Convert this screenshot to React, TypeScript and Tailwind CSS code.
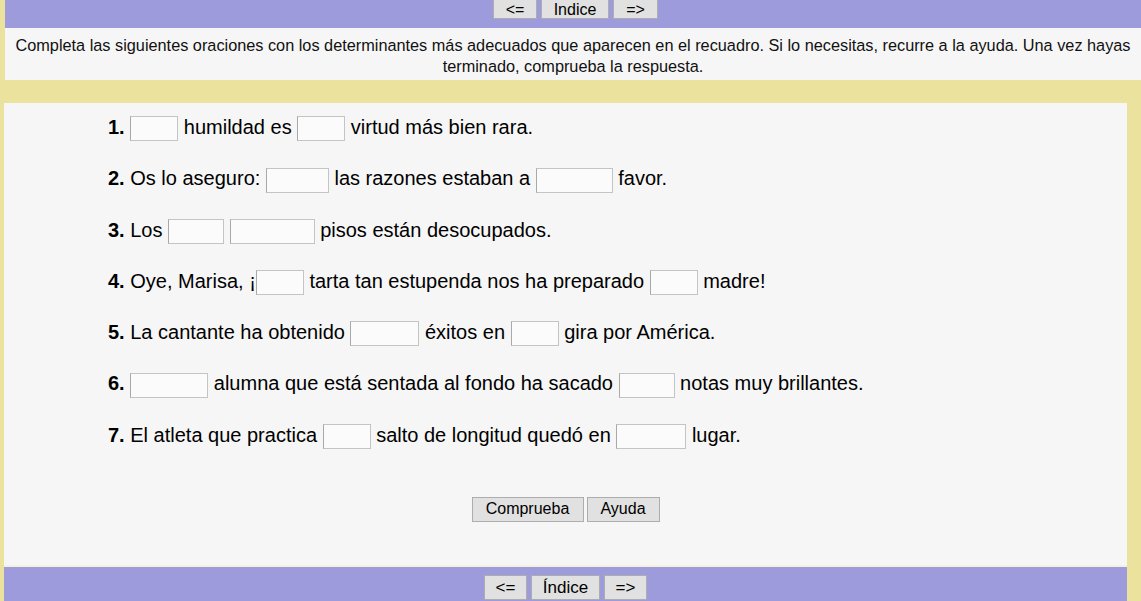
import React from "react";

const F = { fontFamily: '"Liberation Sans", Arial, sans-serif' };

function Box({ w }: { w: string }) {
  return (
    <span
      className={`inline-block h-[25px] align-middle border border-[#c4c4c4] border-l-[#a9a9a9] bg-[#fbfbfb] ${w}`}
    />
  );
}

function NavBtn({ children, w }: { children: React.ReactNode; w: string }) {
  return (
    <button
      className={`h-[25px] ${w} bg-[#e1e1e1] border border-[#adadad] text-[16px] text-black leading-none flex items-center justify-center`}
    >
      {children}
    </button>
  );
}

export default function App() {
  return (
    <div className="w-[1141px] h-[601px] overflow-hidden bg-[#ebe39d] text-black" style={F}>
      {/* top nav */}
      <div className="ml-[5px] h-[28px] bg-[#9e9bdc] flex justify-center pl-[5px]">
        <div className="mt-[-3px] flex gap-[4px]">
          <button className="h-[22px] w-[44px] bg-[#e1e1e1] border border-[#adadad] text-[16px] leading-none flex items-center justify-center pt-[3px]">&lt;=</button>
          <button className="h-[22px] w-[68px] bg-[#e1e1e1] border border-[#adadad] text-[16px] leading-none flex items-center justify-center pt-[3px]">Indice</button>
          <button className="h-[22px] w-[45px] bg-[#e1e1e1] border border-[#adadad] text-[16px] leading-none flex items-center justify-center pt-[3px]">=&gt;</button>
        </div>
      </div>
      {/* info */}
      <div className="ml-[5px] h-[52px] bg-[#f6f6f6] pt-[7px] px-[8px] text-center text-[16.3px] leading-[21px] text-[#111]">
        Completa las siguientes oraciones con los determinantes más adecuados que aparecen en el recuadro. Si lo necesitas, recurre a la ayuda. Una vez hayas terminado, comprueba la respuesta.
      </div>
      <div className="h-[23px]" />
      {/* main panel */}
      <div className="ml-[4px] mr-[14px] h-[464px] bg-[#f6f6f6] border-b-[2px] border-[#f4f2dc] pt-[12px] pl-[104px] text-[20px]">
        <div className="flex flex-col gap-[26.3px]">
          <div className="h-[25px] leading-[25px] whitespace-nowrap">
            <b>1.</b> <Box w="w-[48px]" /> humildad es <Box w="w-[48px]" /> virtud más bien rara.
          </div>
          <div className="h-[25px] leading-[25px] whitespace-nowrap">
            <b>2.</b> Os lo aseguro: <Box w="w-[63px]" /> las razones estaban a <Box w="w-[77px]" /> favor.
          </div>
          <div className="h-[25px] leading-[25px] whitespace-nowrap">
            <b>3.</b> Los <Box w="w-[56px]" /> <Box w="w-[85px]" /> pisos están desocupados.
          </div>
          <div className="h-[25px] leading-[25px] whitespace-nowrap">
            <b>4.</b> Oye, Marisa, ¡<Box w="w-[48px]" /> tarta tan estupenda nos ha preparado <Box w="w-[48px]" /> madre!
          </div>
          <div className="h-[25px] leading-[25px] whitespace-nowrap">
            <b>5.</b> La cantante ha obtenido <Box w="w-[69px]" /> éxitos en <Box w="w-[48px]" /> gira por América.
          </div>
          <div className="h-[25px] leading-[25px] whitespace-nowrap">
            <b>6.</b> <Box w="w-[78px]" /> alumna que está sentada al fondo ha sacado <Box w="w-[56px]" /> notas muy brillantes.
          </div>
          <div className="h-[25px] leading-[25px] whitespace-nowrap">
            <b>7.</b> El atleta que practica <Box w="w-[48px]" /> salto de longitud quedó en <Box w="w-[70px]" /> lugar.
          </div>
        </div>
        <div className="mt-[49px] ml-[-104px] flex justify-center gap-[3px]">
          <NavBtn w="w-[112px]">Comprueba</NavBtn>
          <NavBtn w="w-[73px]">Ayuda</NavBtn>
        </div>
      </div>
      {/* bottom nav */}
      <div className="ml-[4px] mr-[14px] h-[40px] bg-[#9e9bdc] pt-[8px] flex justify-center gap-[4px]">
        <button className="h-[25px] w-[43px] bg-[#e1e1e1] border border-[#adadad] text-[17px] leading-none flex items-center justify-center">&lt;=</button>
        <button className="h-[25px] w-[69px] bg-[#e1e1e1] border border-[#adadad] text-[17px] leading-none flex items-center justify-center">Índice</button>
        <button className="h-[25px] w-[43px] bg-[#e1e1e1] border border-[#adadad] text-[17px] leading-none flex items-center justify-center">=&gt;</button>
      </div>
    </div>
  );
}
